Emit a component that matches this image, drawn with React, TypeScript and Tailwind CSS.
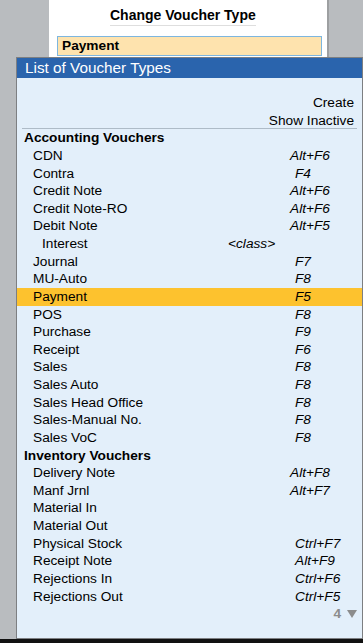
import React from "react";

type Row = {
  name: string;
  keys?: string;
  cls?: string;
  indent?: boolean;
  shift?: boolean; // key text sits a few px further right
  selected?: boolean;
};

const accounting: Row[] = [
  { name: "CDN", keys: "Alt+F6" },
  { name: "Contra", keys: "F4", shift: true },
  { name: "Credit Note", keys: "Alt+F6" },
  { name: "Credit Note-RO", keys: "Alt+F6" },
  { name: "Debit Note", keys: "Alt+F5" },
  { name: "Interest", cls: "<class>", indent: true },
  { name: "Journal", keys: "F7", shift: true },
  { name: "MU-Auto", keys: "F8", shift: true },
  { name: "Payment", keys: "F5", shift: true, selected: true },
  { name: "POS", keys: "F8", shift: true },
  { name: "Purchase", keys: "F9", shift: true },
  { name: "Receipt", keys: "F6", shift: true },
  { name: "Sales", keys: "F8", shift: true },
  { name: "Sales Auto", keys: "F8", shift: true },
  { name: "Sales Head Office", keys: "F8", shift: true },
  { name: "Sales-Manual No.", keys: "F8", shift: true },
  { name: "Sales VoC", keys: "F8", shift: true },
];

const inventory: Row[] = [
  { name: "Delivery Note", keys: "Alt+F8" },
  { name: "Manf Jrnl", keys: "Alt+F7" },
  { name: "Material In" },
  { name: "Material Out" },
  { name: "Physical Stock", keys: "Ctrl+F7", shift: true },
  { name: "Receipt Note", keys: "Alt+F9", shift: true },
  { name: "Rejections In", keys: "Ctrl+F6", shift: true },
  { name: "Rejections Out", keys: "Ctrl+F5", shift: true },
];

function VoucherRow({ row }: { row: Row }) {
  return (
    <li
      className={
        "grid h-[17.64px] grid-cols-[211px_62px_1fr] items-center leading-[17.64px] " +
        (row.selected ? "bg-[#fdc22e]" : "")
      }
    >
      <span className={row.indent ? "pl-[25px]" : "pl-[16px]"}>{row.name}</span>
      <span className="italic">{row.cls}</span>
      <span className={"italic " + (row.shift ? "pl-[5px]" : "")}>{row.keys}</span>
    </li>
  );
}

function Section({ title, rows }: { title: string; rows: Row[] }) {
  return (
    <div>
      <p className="h-[17.64px] pl-[7px] font-bold leading-[17.64px]">{title}</p>
      <ul>
        {rows.map((r) => (
          <VoucherRow key={r.name} row={r} />
        ))}
      </ul>
    </div>
  );
}

export default function App() {
  return (
    <div className="flex h-[643px] w-[363px] flex-col overflow-hidden bg-[#b9bcbf] font-['Liberation_Sans',Arial,sans-serif] text-[13.7px] text-black">
      <div className="relative flex-1">
        {/* the form behind the popup */}
        <div className="ml-[49px] h-full w-[280px] border-r-2 border-[#9d9fa1] bg-white">
          <div className="pl-[61px] pt-[6px]">
            <h1 className="inline-block border-b border-[#dedede] pb-[1px] text-[14px] font-bold leading-[17px]">
              Change Voucher Type
            </h1>
          </div>
          <div className="ml-[8px] mt-[9px] h-[20px] w-[265px] border border-[#7db6df] bg-[#fee3ae] pl-[4px] font-bold leading-[18px]">
            Payment
          </div>
        </div>

        {/* list popup */}
        <div className="absolute left-[16px] top-[57px] flex h-[582px] w-[347px] flex-col border border-[#7d7f82] bg-[#e3effa]">
          <div className="h-[20px] bg-[#2a64ad] pl-[8px] text-[15.3px] leading-[20px] text-white">
            List of Voucher Types
          </div>
          <div className="pt-[16px]">
            <div className="h-[17.64px] pr-[8px] text-right leading-[17.64px]">Create</div>
            <div className="ml-[5px] mr-[5px] h-[17.64px] border-b border-[#aebbc7] pr-[3px] text-right leading-[17.64px]">
              Show Inactive
            </div>
            <Section title="Accounting Vouchers" rows={accounting} />
            <Section title="Inventory Vouchers" rows={inventory} />
            <div className="flex h-[17.64px] items-center justify-end gap-[6px] pr-[5px] font-bold text-[#8c8c8c]">
              <span>4</span>
              <svg width="10" height="8" viewBox="0 0 10 8">
                <path d="M0 0 H10 L5 8 Z" fill="#8c8c8c" />
              </svg>
            </div>
          </div>
        </div>
      </div>
      <div className="h-[4px] bg-[#111]" />
    </div>
  );
}
